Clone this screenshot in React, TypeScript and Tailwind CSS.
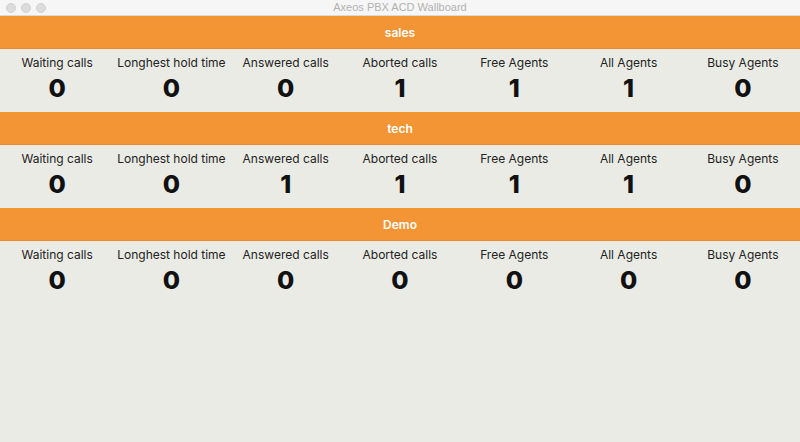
const queues = [
  { name: "sales", stats: [0, 0, 0, 1, 1, 1, 0] },
  { name: "tech", stats: [0, 0, 1, 1, 1, 1, 0] },
  { name: "Demo", stats: [0, 0, 0, 0, 0, 0, 0] },
]

const labels = [
  "Waiting calls",
  "Longhest hold time",
  "Answered calls",
  "Aborted calls",
  "Free Agents",
  "All Agents",
  "Busy Agents",
]

function TitleBar() {
  return (
    <div className="relative flex h-4 items-center border-b border-[#dadada] bg-[#f6f6f6]">
      <div className="absolute left-[6px] top-[3px] flex gap-[5px]">
        <span className="h-[10px] w-[10px] rounded-full border border-[#d0d0d0] bg-[#dcdcdc]" />
        <span className="h-[10px] w-[10px] rounded-full border border-[#d0d0d0] bg-[#dcdcdc]" />
        <span className="h-[10px] w-[10px] rounded-full border border-[#d0d0d0] bg-[#dcdcdc]" />
      </div>
      <span className="w-full text-center font-['Liberation_Sans',sans-serif] text-[11px] leading-none text-[#b2b2b2]">
        Axeos PBX ACD Wallboard
      </span>
    </div>
  )
}

function Queue({ name, stats }: { name: string; stats: number[] }) {
  return (
    <section>
      <div className="flex h-[33px] items-center justify-center border-t border-[#f7962a] border-b border-b-[#e58a30] bg-[#f39535]">
        <span className="text-[12px] font-semibold text-white">{name}</span>
      </div>
      <div className="grid h-[63px] grid-cols-7 pt-[6px]">
        {labels.map((label, i) => (
          <div key={label} className="flex flex-col items-center">
            <span className="text-[12px] leading-4 text-[#222]">{label}</span>
            <span className="text-[25px] font-extrabold leading-[34px] text-[#111]">{stats[i]}</span>
          </div>
        ))}
      </div>
    </section>
  )
}

export default function App() {
  return (
    <div className="flex h-[442px] w-[800px] flex-col overflow-hidden bg-[#ebebe6] font-['Inter',sans-serif]">
      <TitleBar />
      {queues.map((q) => (
        <Queue key={q.name} name={q.name} stats={q.stats} />
      ))}
    </div>
  )
}
